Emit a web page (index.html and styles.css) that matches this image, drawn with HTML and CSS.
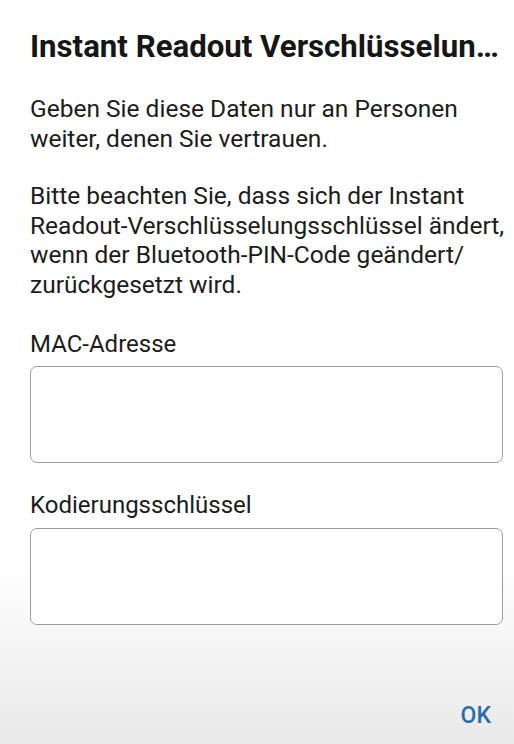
FILE: index.html
```html
<!DOCTYPE html>
<html lang="de">
<head>
  <meta charset="UTF-8">
  <meta name="viewport" content="width=device-width, initial-scale=1.0">
  <title>Instant Readout</title>
  <link rel="stylesheet" href="styles.css">
</head>
<body>
  <div class="dialog">
    <h2 class="dialog-title">Instant Readout Verschlüsselungsschlüssel</h2>

    <p class="dialog-text">Geben Sie diese Daten nur an Personen weiter, denen Sie vertrauen.</p>
    <p class="dialog-text">Bitte beachten Sie, dass sich der Instant Readout-Verschlüsselungsschlüssel ändert, wenn der Bluetooth-PIN-Code geändert/ zurückgesetzt wird.</p>

    <div class="field">
      <label class="field-label">MAC-Adresse</label>
      <div class="field-box"></div>
    </div>
    <div class="field">
      <label class="field-label">Kodierungsschlüssel</label>
      <div class="field-box"></div>
    </div>

    <div class="dialog-actions">
      <button class="ok-button">OK</button>
    </div>
  </div>
</body>
</html>
```

FILE: styles.css
```css
body {
  margin: 0;
  padding: 0;
  font-family: Roboto, "Noto Sans", sans-serif;
  color: #1c1c1c;
  background: linear-gradient(to bottom, #fff 0%, #fff 76%, #e9e9e9 100%);
  height: 744px;
  overflow: hidden;
}
.dialog {
  padding: 27px 2px 0 30px;
  display: flex;
  flex-direction: column;
}
.dialog-title {
  margin: 0;
  font-size: 31.2px;
  font-weight: bold;
  line-height: 40px;
  white-space: nowrap;
  overflow: hidden;
  text-overflow: ellipsis;
  color: #161616;
}
.dialog-text {
  margin: 27px 0 0;
  font-size: 24.5px;
  line-height: 29.5px;
}
.dialog-text + .dialog-text { margin-top: 28px; }

.field { margin-top: 30px; margin-right: 9px; }
.field-label {
  display: block;
  font-size: 24px;
  line-height: 30px;
}
.field-box {
  margin-top: 7px;
  height: 95px;
  border: 1px solid #9d9d9d;
  border-radius: 7px;
  background: #fff;
}
.field + .field { margin-top: 27px; }
.field + .field .field-box { margin-top: 8px; }

.dialog-actions {
  display: flex;
  justify-content: flex-end;
  margin-top: 76px;
  padding-right: 21px;
}
.ok-button {
  background: none;
  border: none;
  padding: 0;
  font-family: inherit;
  font-size: 23px;
  line-height: 30px;
  font-weight: 500;
  color: #2b6cae;
}
```
